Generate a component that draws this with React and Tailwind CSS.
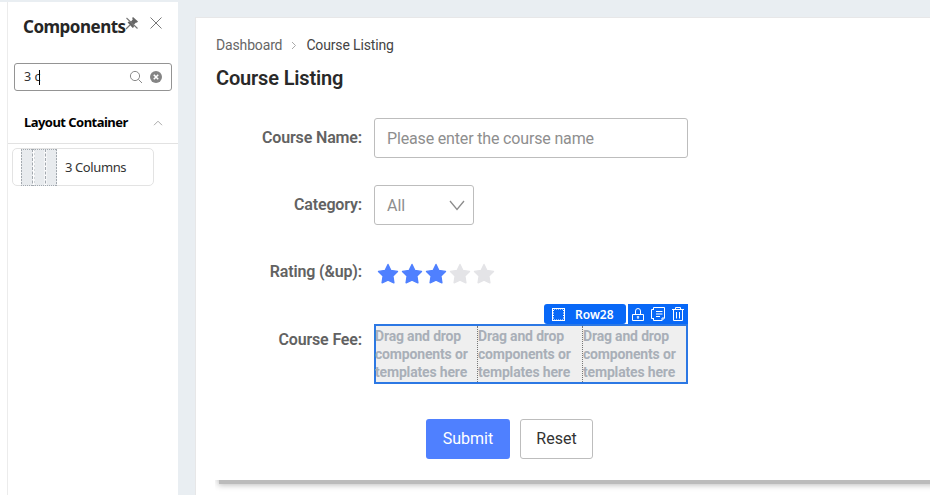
import React from "react";

const SANS = "font-['Noto_Sans','Open_Sans',sans-serif]";

function PinIcon() {
  return (
    <svg width="14" height="14" viewBox="0 0 14 14" className="shrink-0">
      <path d="M8 1 13 5.5 11.8 6.8 11 6.5 8.8 8.8 8.9 11 7.8 12 2.6 6.6 3.8 5.6 6 5.6 7.7 3.4 7.2 2Z" fill="#666" />
      <path d="M5 9 1 13M1.5 2 12.5 12.5" stroke="#777" strokeWidth="1.1" fill="none" />
    </svg>
  );
}

function CloseIcon() {
  return (
    <svg width="14" height="14" viewBox="0 0 14 14" className="shrink-0">
      <path d="M1.5 1.5 12.5 12.5M12.5 1.5 1.5 12.5" stroke="#777" strokeWidth="1" fill="none" />
    </svg>
  );
}

function SearchIcon() {
  return (
    <svg width="14" height="14" viewBox="0 0 14 14" fill="none" stroke="#8a8a8a" strokeWidth="1">
      <circle cx="6" cy="6" r="4.6" />
      <path d="M9.4 9.4 13 13" />
    </svg>
  );
}

function ClearIcon() {
  return (
    <svg width="12" height="12" viewBox="0 0 12 12">
      <circle cx="6" cy="6" r="6" fill="#858585" />
      <path d="M3.8 3.8 8.2 8.2M8.2 3.8 3.8 8.2" stroke="#fff" strokeWidth="1.6" />
    </svg>
  );
}

function ColumnsIcon() {
  return (
    <svg width="36" height="37" viewBox="0 0 36 37">
      <rect width="36" height="37" fill="#e8ebee" />
      <path d="M12.5 1V36M24.5 1V36" stroke="#fff" strokeWidth="2" />
      <g stroke="#a3a9af" fill="none" strokeWidth="1">
        <path d="M0 .5H36M0 36.5H36" strokeDasharray="1 1" />
        <path d="M.5 0V37M35.5 0V37" strokeDasharray="2 1" />
        <path d="M11.5 0V37M24.5 0V37" strokeDasharray="3 1.5" />
        <path d="M13.5 0V37" strokeDasharray="2 2" strokeOpacity=".4" />
      </g>
    </svg>
  );
}

function Star({ on }) {
  return (
    <svg width="24" height="22" viewBox="0 0 24 22">
      <path
        d="M12 1.5 14.9 7.5 21.5 8.4 16.9 13.1 17.9 19.8 12 17.2 6.1 19.8 7.1 13.1 2.5 8.4 9.1 7.5Z"
        fill={on ? "#4f80ff" : "#e4e4e7"}
        stroke={on ? "#4f80ff" : "#e4e4e7"}
        strokeWidth="1.4"
        strokeLinejoin="round"
      />
    </svg>
  );
}

function RowIcon() {
  return (
    <svg width="15" height="15" viewBox="0 0 15 15" fill="none" stroke="#fff">
      <path d="M1 1.5H14M1 13.5H14" strokeWidth="1" />
      <path d="M1.5 1V14M13.5 1V14" strokeWidth="1" />
      <path d="M2.5 3V12M12.5 3V12" strokeDasharray="1 1.5" />
      <path d="M3 2.5H12M3 12.5H12" strokeDasharray="1 1" strokeOpacity=".5" />
    </svg>
  );
}

function LockIcon() {
  return (
    <svg width="12" height="13" viewBox="0 0 12 13" fill="none" stroke="#fff">
      <path d="M.5 6.5H11.5V12.5H.5ZM3.5 6V3A2.5 2.5 0 0 1 8.5 3V6M6 8V11M4.8 9H7.2" />
    </svg>
  );
}

function CopyIcon() {
  return (
    <svg width="14" height="14" viewBox="0 0 14 14" fill="none" stroke="#fff">
      <path d="M2.5 2V.5H13.5V11L11 13.5H2.5V11" />
      <path d="M.5 2.5H3M.5 11.5H3M.5 2.5V11.5M5 4.5H11.5M5 7H11.5M5 9.5H9" />
      <path d="M11 13.5V11H13.5" />
    </svg>
  );
}

function TrashIcon() {
  return (
    <svg width="12" height="14" viewBox="0 0 12 14" fill="none" stroke="#fff">
      <path d="M0 2.5H12M3.5 2.5V.5H8.5V2.5M1.5 2.5V13.5H10.5V2.5M4.5 5V11.5M7.5 5V11.5" />
    </svg>
  );
}

function Sidebar() {
  return (
    <aside className={`w-[171px] shrink-0 border-l border-[#ececec] bg-white ${SANS}`}>
      <div className="flex h-[61px] items-start pl-[15px] pt-[13px]">
        <h2 className="w-[103px] shrink-0 whitespace-nowrap text-[17px] font-bold leading-6 tracking-[-0.5px] text-[#262626]">Components</h2>
        <div className="-ml-[1px] mt-px flex gap-[10px]">
          <PinIcon />
          <CloseIcon />
        </div>
      </div>
      <div className="ml-[6px] flex h-[28px] w-[158px] items-center rounded-[3px] border border-[#949494] pl-[9px] pr-[9px] text-[12.5px] text-[#333]">
        <span className="mt-px">3 c</span>
        <span className="-ml-px h-[15px] w-px bg-black" />
        <span className="ml-auto flex items-center gap-[7px]">
          <SearchIcon />
          <ClearIcon />
        </span>
      </div>
      <div className="mt-[11px] flex h-[42px] items-center border-b border-[#e2e2e2] pl-4 pr-[15px]">
        <span className="whitespace-nowrap text-[13px] font-bold tracking-[-0.54px] text-black">Layout Container</span>
        <svg width="10" height="6" viewBox="0 0 10 6" className="ml-auto" fill="none" stroke="#aaa">
          <path d="M1 5.2 5 1.2 9 5.2" />
        </svg>
      </div>
      <div className="ml-1 mt-1 flex h-[38px] w-[142px] items-center rounded-[5px] border border-[#e3e3e3] pl-2 text-[13px] text-[#333]">
        <ColumnsIcon />
        <span className="ml-2 mt-[2px] tracking-[-0.4px]">3 Columns</span>
      </div>
    </aside>
  );
}

function Field({ label, className, children }) {
  return (
    <div className={`flex items-start ${className}`}>
      <div className="mr-3 w-[146px] shrink-0 whitespace-nowrap text-right font-semibold leading-10 tracking-[-0.15px] text-[#626262]">{label}</div>
      {children}
    </div>
  );
}

function DropRow() {
  return (
    <div className="relative mt-[4px] flex h-[60px] w-[314px] border-2 border-[#2c78e4] bg-[#efefef]">
      <div className="absolute -top-[22px] right-[-2px] flex h-[20px] text-white">
        <div className={`flex w-[82px] items-center rounded-[3px] bg-[#0868f7] pl-[7px] text-[12px] font-semibold ${SANS}`}>
          <RowIcon />
          <span className="ml-[9px] mt-px">Row28</span>
        </div>
        <div className="ml-[2px] flex w-[60px] items-center justify-between bg-[#0868f7] pl-1 pr-1">
          <LockIcon />
          <CopyIcon />
          <TrashIcon />
        </div>
      </div>
      {[0, 1, 2].map((i) => (
        <div
          key={i}
          className={`shrink-0 whitespace-nowrap text-[14px] font-bold leading-[18px] tracking-[-0.17px] text-[#a9afb8] ${
            i === 0 ? "w-[101px]" : "w-[105px] border-l border-dotted border-[#777]"
          }`}
        >
          <div className={i === 0 ? "-ml-px mt-px" : "mt-px"}>Drag and drop<br />components or<br />templates here</div>
        </div>
      ))}
    </div>
  );
}

export default function App() {
  return (
    <div className="flex h-[495px] w-[930px] overflow-hidden bg-white pl-[7px] font-[Roboto,sans-serif] text-[16px] shadow-[inset_0_2px_0_#e9eef2]">
      <div className="mt-[2px] flex"><Sidebar /></div>
      <main className="flex min-w-0 flex-1 flex-col bg-[#e9eef2] pl-[17px] pt-[17px]">
        <section className="flex-1 border-l border-t border-[#e7e7e8] bg-white">
          <div className="h-[462px] pl-5 pt-[17px]">
            <nav className="flex h-5 items-center text-[14px] tracking-[-0.15px] text-[#666]">
              <span>Dashboard</span>
              <svg width="6" height="9" viewBox="0 0 6 9" className="ml-[9px] mr-[9px]" fill="none" stroke="#aaa">
                <path d="M1 1 4.5 4.5 1 8" />
              </svg>
              <span className="text-[#444]">Course Listing</span>
            </nav>
            <h1 className="mt-[9px] text-[20px] font-semibold leading-7 tracking-[-0.16px] text-[#292929]">Course Listing</h1>
            <Field label="Course Name:" className="mt-[26px]">
              <div className="flex h-10 w-[314px] items-center rounded-[3px] border border-[#bdbdbd] px-3 pt-px tracking-[-0.16px] text-[#8e8e8e]">Please enter the course name</div>
            </Field>
            <Field label="Category:" className="mt-[27px]">
              <div className="flex h-10 w-[100px] items-center justify-between rounded-[3px] border border-[#bdbdbd] pl-3 pr-2 pt-px text-[#8e8e8e]">
                All
                <svg width="16" height="11" viewBox="0 0 16 11" fill="none" stroke="#8c8c8c" strokeWidth="1.3">
                  <path d="M1 1 8 9.5 15 1" />
                </svg>
              </div>
            </Field>
            <Field label="Rating (&amp;up):" className="mt-[27px]">
              <div className="ml-[2px] mt-[11px] flex">
                {[1, 2, 3, 4, 5].map((n) => <Star key={n} on={n < 4} />)}
              </div>
            </Field>
            <Field label="Course Fee:" className="mt-[28px]">
              <DropRow />
            </Field>
            <div className="ml-[210px] mt-[35px] flex gap-[10px]">
              <button className="h-10 w-[84px] rounded-[3px] bg-[#4f80ff] text-white">Submit</button>
              <button className="h-10 w-[73px] rounded-[3px] border border-[#bdbdbd] bg-white text-[#333]">Reset</button>
            </div>
          </div>
          <div className="relative ml-[19px] h-[12px] overflow-hidden">
            <div className="absolute -top-[10px] left-1 right-[-10px] h-[14px] bg-[#bbb] shadow-[0_0_6px_1px_#bbb]" />
          </div>
        </section>
      </main>
    </div>
  );
}
